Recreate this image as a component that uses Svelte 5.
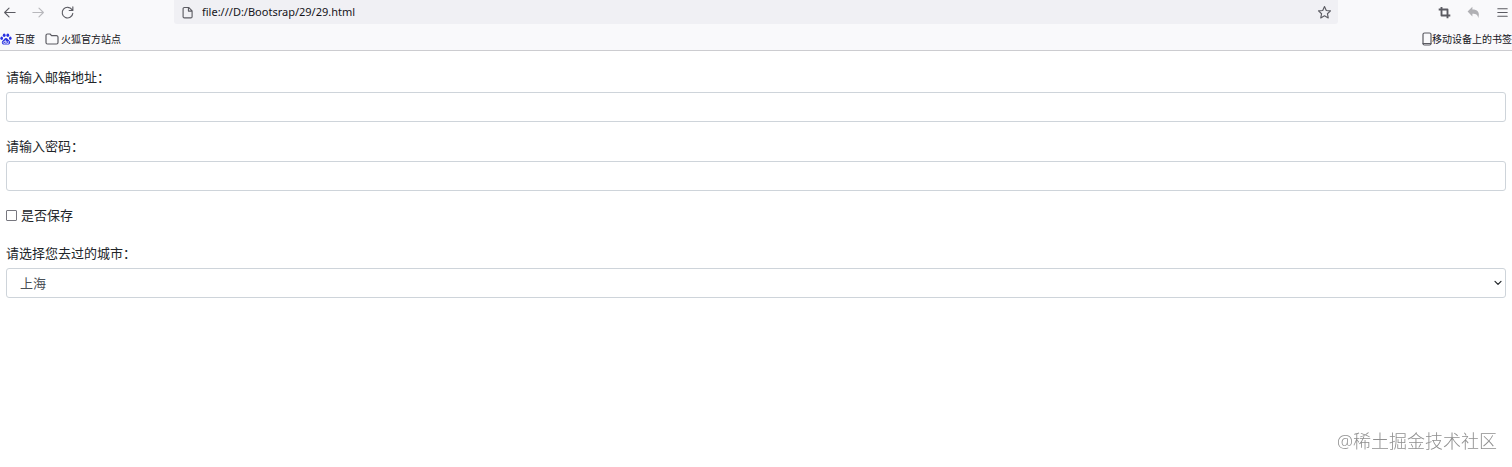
<script lang="ts">
  let url = "file:///D:/Bootsrap/29/29.html";
  let email = "";
  let password = "";
  let save = false;
  let city = "上海";

  const cities = ["上海", "北京", "广州", "深圳"];
</script>

<svelte:head>
  <title>29.html</title>
</svelte:head>

<header class="browser">
  <div class="toolbar">
    <nav class="tools">
      <button aria-label="后退">
        <svg viewBox="0 0 16 16"><path d="M14 8H3M7.5 3.3 2.8 8l4.7 4.7" /></svg>
      </button>
      <button aria-label="前进" class="faded">
        <svg viewBox="0 0 16 16"><path d="M2 8h11M8.5 3.3 13.2 8l-4.7 4.7" /></svg>
      </button>
      <button aria-label="刷新">
        <svg viewBox="0 0 16 16"><path d="M12.8 5A5.7 5.7 0 1 0 13.7 9M13.7 2v3.900H9.800" /></svg>
      </button>
    </nav>

    <div class="address">
      <svg viewBox="0 0 16 16">
        <path d="M4.6 2.6h4.6l3.7 3.7v6.1a1.3 1.3 0 0 1-1.3 1.3h-7a1.3 1.3 0 0 1-1.3-1.3V3.9a1.3 1.3 0 0 1 1.3-1.3zM9 2.8v3.7h3.7" />
      </svg>
      <input type="text" aria-label="地址" bind:value={url} />
      <button aria-label="收藏">
        <svg viewBox="0 0 16 16">
          <path d="m8 1.7 1.900 4.100 4.500.5-3.300 3 .9 4.500L8 11.500l-4 2.300.9-4.500-3.300-3 4.500-.5z" />
        </svg>
      </button>
    </div>

    <div class="tools right">
      <button aria-label="截图">
        <svg viewBox="0 0 16 16" class="bold"><path d="M4.8 2v9.200H14.200M1.800 4.800h9.400V14.200" /></svg>
      </button>
      <button aria-label="撤销">
        <svg viewBox="0 0 16 16" class="undo">
          <path d="M6.800 1.800v3.100c5 0 8.600 2.600 6.200 9.100C12.900 10.500 11 9.200 6.800 9.200v3.100L1.700 7z" />
        </svg>
      </button>
      <button aria-label="菜单">
        <svg viewBox="0 0 16 16"><path d="M3 4h10M3 8h10M3 12h10" /></svg>
      </button>
    </div>
  </div>

  <div class="bookmarks">
    <a href="#baidu">
      <svg viewBox="0 0 12 12" class="paw">
        <ellipse cx="4.2" cy="2.3" rx="1.4" ry="1.8" />
        <ellipse cx="7.8" cy="2.3" rx="1.4" ry="1.8" />
        <ellipse cx="1.7" cy="5.2" rx="1.3" ry="1.7" />
        <ellipse cx="10.3" cy="5.2" rx="1.3" ry="1.7" />
        <path d="M6 5c1.5 0 2 1.7 3.1 2.6 1.7 1.4 1.2 4-.9 4H3.8c-2.1 0-2.6-2.6-.9-4C4 6.7 4.5 5 6 5z" />
        <path class="mark" d="M5.3 7.3v3.2H4.2c-1.3 0-1.3-2 0-2h1M6.7 8.5v2h1.6v-2" />
      </svg>
      百度
    </a>
    <a href="#firefox">
      <svg viewBox="0 0 14 12" class="folder">
        <path d="M1 2.500A1.500 1.500 0 0 1 2.500 1H5l1.600 1.700h4.900A1.500 1.500 0 0 1 13 4.200v5.300a1.500 1.500 0 0 1-1.500 1.500h-9A1.500 1.500 0 0 1 1 9.500z" />
      </svg>
      火狐官方站点
    </a>
    <a href="#mobile" class="mobile">
      <svg viewBox="0 0 10 14">
        <rect x="1" y="1" width="8" height="12" rx="1.5" />
        <path d="M1 11.5h8" />
      </svg>
      移动设备上的书签
    </a>
  </div>
</header>

<form on:submit|preventDefault>
  <div class="form-group">
    <label for="email">请输入邮箱地址：</label>
    <input class="form-control" type="email" id="email" bind:value={email} />
  </div>
  <div class="form-group">
    <label for="password">请输入密码：</label>
    <input class="form-control" type="password" id="password" bind:value={password} />
  </div>
  <div class="form-check">
    <input type="checkbox" id="save" bind:checked={save} />
    <label for="save">是否保存</label>
  </div>
  <div class="form-group">
    <label for="city">请选择您去过的城市：</label>
    <div class="select">
      <select class="form-control" id="city" bind:value={city}>
        {#each cities as name (name)}
          <option>{name}</option>
        {/each}
      </select>
      <svg viewBox="0 0 8 6"><path d="m1 1.3 3 3 3-3" /></svg>
    </div>
  </div>
</form>

<div class="watermark">@稀土掘金技术社区</div>

<style>
  :global(body) {
    background: #fff;
    color: #212529;
    font-family: "Open Sans", "Noto Sans CJK SC", sans-serif;
    font-size: 13px;
    line-height: 20px;
  }

  button {
    display: flex;
    padding: 0;
    border: 0;
    background: none;
    color: inherit;
    cursor: pointer;
  }

  svg {
    flex: none;
    width: 15px;
    height: 15px;
    fill: none;
    stroke: currentColor;
    stroke-width: 1.2;
    stroke-linecap: round;
    stroke-linejoin: round;
  }

  .browser {
    background: #f9f9fb;
    border-bottom: 1px solid #ccccd0;
    color: #5b5b62;
  }

  .toolbar {
    display: flex;
    height: 24px;
  }

  .tools {
    display: flex;
    align-items: center;
    gap: 14px;
    box-sizing: border-box;
    width: 174px;
    padding: 0 2px;
  }

  .right {
    justify-content: flex-end;
  }

  .faded {
    color: #b8b8bc;
  }

  .bold {
    stroke-width: 2;
    stroke-linecap: butt;
  }

  .undo {
    fill: #b0b0b4;
    stroke: none;
  }

  .address {
    flex: 1;
    display: flex;
    align-items: center;
    gap: 7px;
    padding: 0 6px;
    background: #f0f0f4;
    border-radius: 0 0 3px 3px;
  }

  .address input {
    flex: 1;
    min-width: 0;
    padding: 0 0 2px;
    border: 0;
    background: none;
    color: #15141a;
    font-family: "Noto Sans", sans-serif;
    font-size: 11px;
    outline: none;
  }

  .bookmarks {
    display: flex;
    align-items: center;
    gap: 10px;
    height: 26px;
    padding-top: 4px;
    box-sizing: border-box;
  }

  .bookmarks a {
    display: flex;
    align-items: center;
    gap: 2px;
    color: #15141a;
    font-size: 10px;
    text-decoration: none;
    white-space: nowrap;
  }

  .bookmarks svg {
    color: #5b5b62;
  }

  .bookmarks .paw {
    width: 12px;
    height: 12px;
    margin-right: 1px;
    fill: #2932e1;
    stroke: none;
  }

  .paw .mark {
    fill: none;
    stroke: #fff;
    stroke-width: 0.7;
  }

  .bookmarks .folder {
    width: 14px;
    height: 12px;
  }

  .bookmarks .mobile {
    gap: 0;
    margin-left: auto;
  }

  .mobile svg {
    width: 10px;
    height: 14px;
  }

  form {
    padding: 16px 6px 0;
  }

  .form-group {
    margin-bottom: 14px;
  }

  .form-group label {
    display: block;
    margin-bottom: 5px;
  }

  .form-control {
    display: block;
    box-sizing: border-box;
    width: 100%;
    height: 30px;
    padding: 0 13px;
    border: 1px solid #ced4da;
    border-radius: 3px;
    background: #fff;
    color: #495057;
    font: inherit;
    appearance: none;
  }

  .form-check {
    display: flex;
    align-items: center;
    gap: 4px;
    margin-bottom: 18px;
  }

  .form-check input {
    box-sizing: border-box;
    width: 11px;
    height: 11px;
    margin: 0;
    border: 1px solid #77777f;
    border-radius: 1px;
    appearance: none;
  }

  .form-check input:checked {
    background: #0060df;
  }

  .select {
    display: grid;
    align-items: center;
  }

  .select select,
  .select svg {
    grid-area: 1 / 1;
  }

  .select svg {
    justify-self: end;
    width: 8px;
    height: 6px;
    margin-right: 4px;
    pointer-events: none;
  }

  .watermark {
    position: fixed;
    right: 15px;
    bottom: 14px;
    color: #8f8f8f;
    font-size: 18px;
    font-weight: 300;
    line-height: 24px;
  }
</style>
